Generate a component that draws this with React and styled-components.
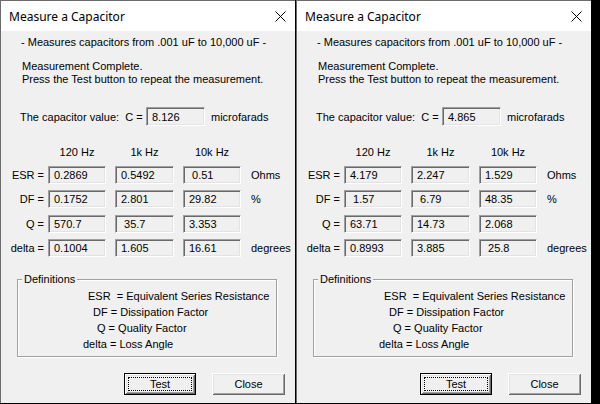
import React from 'react';
import styled, { createGlobalStyle } from 'styled-components';

const GlobalStyle = createGlobalStyle`
  html, body {
    margin: 0;
    padding: 0;
    background: #000;
  }
  body {
    width: 600px;
    height: 404px;
    overflow: hidden;
    font-family: "Liberation Sans", Arial, sans-serif;
    font-size: 11px;
    color: #000;
  }
`;

const Desktop = styled.div`
  display: flex;
  gap: 1px;
  width: 600px;
  height: 404px;
  background: #000;
`;

const Dialog = styled.div`
  width: 295px;
  height: 403px;
  box-sizing: border-box;
  background: #f0f0f0;
  border-left: 1px solid #6b6b6b;
  border-top: 1px solid #6b6b6b;
  display: flex;
  flex-direction: column;
`;

const TitleBar = styled.div`
  height: 30px;
  background: #fff;
  display: flex;
  align-items: center;
  justify-content: space-between;
  padding: 0 9px 0 8px;
  font-family: "Noto Sans", "Open Sans", sans-serif;
  font-size: 12px;
`;

const CloseGlyph = styled.svg`
  width: 11px;
  height: 11px;
  display: block;
`;

const Intro = styled.div`
  margin: 5px 0 0 20px;
  line-height: 13px;
`;

const Status = styled.div`
  margin: 11px 0 0 21px;
  line-height: 13px;
`;

const CapRow = styled.div`
  display: flex;
  align-items: center;
  margin: 21px 0 0 19px;
  height: 19px;
`;

const Field = styled.div`
  box-sizing: border-box;
  width: ${p => p.$w || 58}px;
  height: ${p => p.$h || 18}px;
  border-top: 1px solid #a0a0a0;
  border-left: 1px solid #a0a0a0;
  border-right: 1px solid #fff;
  border-bottom: 1px solid #fff;
  box-shadow: inset 1px 1px 0 #696969, inset -1px -1px 0 #e3e3e3;
  background: #f0f0f0;
  padding-left: 5px;
  display: flex;
  align-items: center;
  white-space: pre;
  flex-shrink: 0;
`;

const CapLabel = styled.span`
  width: 126px;
  white-space: pre;
`;

const Unit = styled.span`
  margin-left: ${p => p.$gap || 6}px;
`;

const Table = styled.div`
  margin-top: 20px;
  display: flex;
  flex-direction: column;
  gap: 6.3px;
`;

const Row = styled.div`
  display: flex;
  align-items: center;
  height: ${p => (p.$head ? 13 : 18)}px;
  margin-bottom: ${p => (p.$head ? 0.7 : 0)}px;
`;

const RowLabel = styled.div`
  width: 43px;
  margin-right: 4px;
  text-align: right;
  white-space: pre;
`;

const Head = styled.div`
  width: ${p => p.$w || 58}px;
  text-align: center;
  line-height: 13px;
`;

const Cells = styled.div`
  display: flex;
  gap: 9px;
`;

const GroupBox = styled.div`
  position: relative;
  margin: 22px 0 0 16px;
  width: 260px;
  height: 78px;
  box-sizing: border-box;
  border: 1px solid #a0a0a0;
  box-shadow: 1px 1px 0 #fff, inset 1px 1px 0 #fff;
  padding-top: 8px;
`;

const Legend = styled.span`
  position: absolute;
  top: -7px;
  left: 4px;
  padding: 0 2px;
  line-height: 13px;
  background: #f0f0f0;
`;

const DefLine = styled.div`
  padding-left: ${p => p.$indent}px;
  line-height: 16px;
  white-space: pre;
`;

const Buttons = styled.div`
  display: flex;
  gap: 16px;
  margin: 16px 0 0 123px;
`;

const Button = styled.button`
  box-sizing: border-box;
  width: ${p => p.$w || 72}px;
  height: 22px;
  padding: 0;
  font-family: "Liberation Sans", Arial, sans-serif;
  font-size: 11px;
  color: #000;
  background: #f0f0f0;
  border: ${p => (p.$default ? '1px solid #000' : 'none')};
  box-shadow: ${p =>
    p.$default
      ? 'inset 1px 1px 0 #fff, inset -1px -1px 0 #696969, inset 2px 2px 0 #e3e3e3, inset -2px -2px 0 #a0a0a0'
      : 'inset 1px 1px 0 #fff, inset -1px -1px 0 #696969, inset 2px 2px 0 #e3e3e3, inset -2px -2px 0 #a0a0a0'};
  display: flex;
  align-items: center;
  justify-content: center;
`;

const FocusRing = styled.span`
  box-sizing: border-box;
  width: 100%;
  margin: 3px;
  height: 14px;
  border: 1px dotted #000;
  display: flex;
  align-items: center;
  justify-content: center;
`;

const readings = [
  {
    cap: '8.126',
    rows: [
      ['ESR =', ['0.2869', '0.5492', ' 0.51'], 'Ohms'],
      ['DF =', ['0.1752', '2.801', '29.82'], '%'],
      ['Q =', ['570.7', ' 35.7', '3.353'], ''],
      ['delta =', ['0.1004', '1.605', '16.61'], 'degrees'],
    ],
  },
  {
    cap: '4.865',
    rows: [
      ['ESR =', ['4.179', '2.247', '1.529'], 'Ohms'],
      ['DF =', [' 1.57', ' 6.79', '48.35'], '%'],
      ['Q =', ['63.71', '14.73', '2.068'], ''],
      ['delta =', ['0.8993', '3.885', ' 25.8'], 'degrees'],
    ],
  },
];

const widths = [58, 59, 58];

const definitions = [
  ['ESR  = Equivalent Series Resistance', 70],
  ['DF = Dissipation Factor', 75],
  ['Q = Quality Factor', 79],
  ['delta = Loss Angle', 65],
];

const CapacitorDialog = ({ data }) => (
  <Dialog>
    <TitleBar>
      <span>Measure a Capacitor</span>
      <CloseGlyph viewBox="0 0 11 11">
        <path d="M0.5 0.5 L10.5 10.5 M10.5 0.5 L0.5 10.5" stroke="#000" strokeWidth="1" fill="none" />
      </CloseGlyph>
    </TitleBar>

    <Intro>- Measures capacitors from .001 uF to 10,000 uF -</Intro>
    <Status>
      Measurement Complete.
      <br />
      Press the Test button to repeat the measurement.
    </Status>

    <CapRow>
      <CapLabel>The capacitor value:  C =</CapLabel>
      <Field $w={59} $h={19}>{data.cap}</Field>
      <Unit>microfarads</Unit>
    </CapRow>

    <Table>
      <Row $head>
        <RowLabel />
        <Cells>
          <Head $w={58}>120 Hz</Head>
          <Head $w={59}>1k Hz</Head>
          <Head $w={58}>10k Hz</Head>
        </Cells>
      </Row>
      {data.rows.map(([label, vals, unit]) => (
        <Row key={label}>
          <RowLabel>{label}</RowLabel>
          <Cells>
            {vals.map((v, i) => (
              <Field key={i} $w={widths[i]}>{v}</Field>
            ))}
          </Cells>
          <Unit $gap={10}>{unit}</Unit>
        </Row>
      ))}
    </Table>

    <GroupBox>
      <Legend>Definitions</Legend>
      {definitions.map(([text, indent]) => (
        <DefLine key={text} $indent={indent}>{text}</DefLine>
      ))}
    </GroupBox>

    <Buttons>
      <Button $default>
        <FocusRing>Test</FocusRing>
      </Button>
      <Button $w={73}>Close</Button>
    </Buttons>
  </Dialog>
);

export default function App() {
  return (
    <>
      <GlobalStyle />
      <Desktop>
        {readings.map((r, i) => (
          <CapacitorDialog key={i} data={r} />
        ))}
      </Desktop>
    </>
  );
}
